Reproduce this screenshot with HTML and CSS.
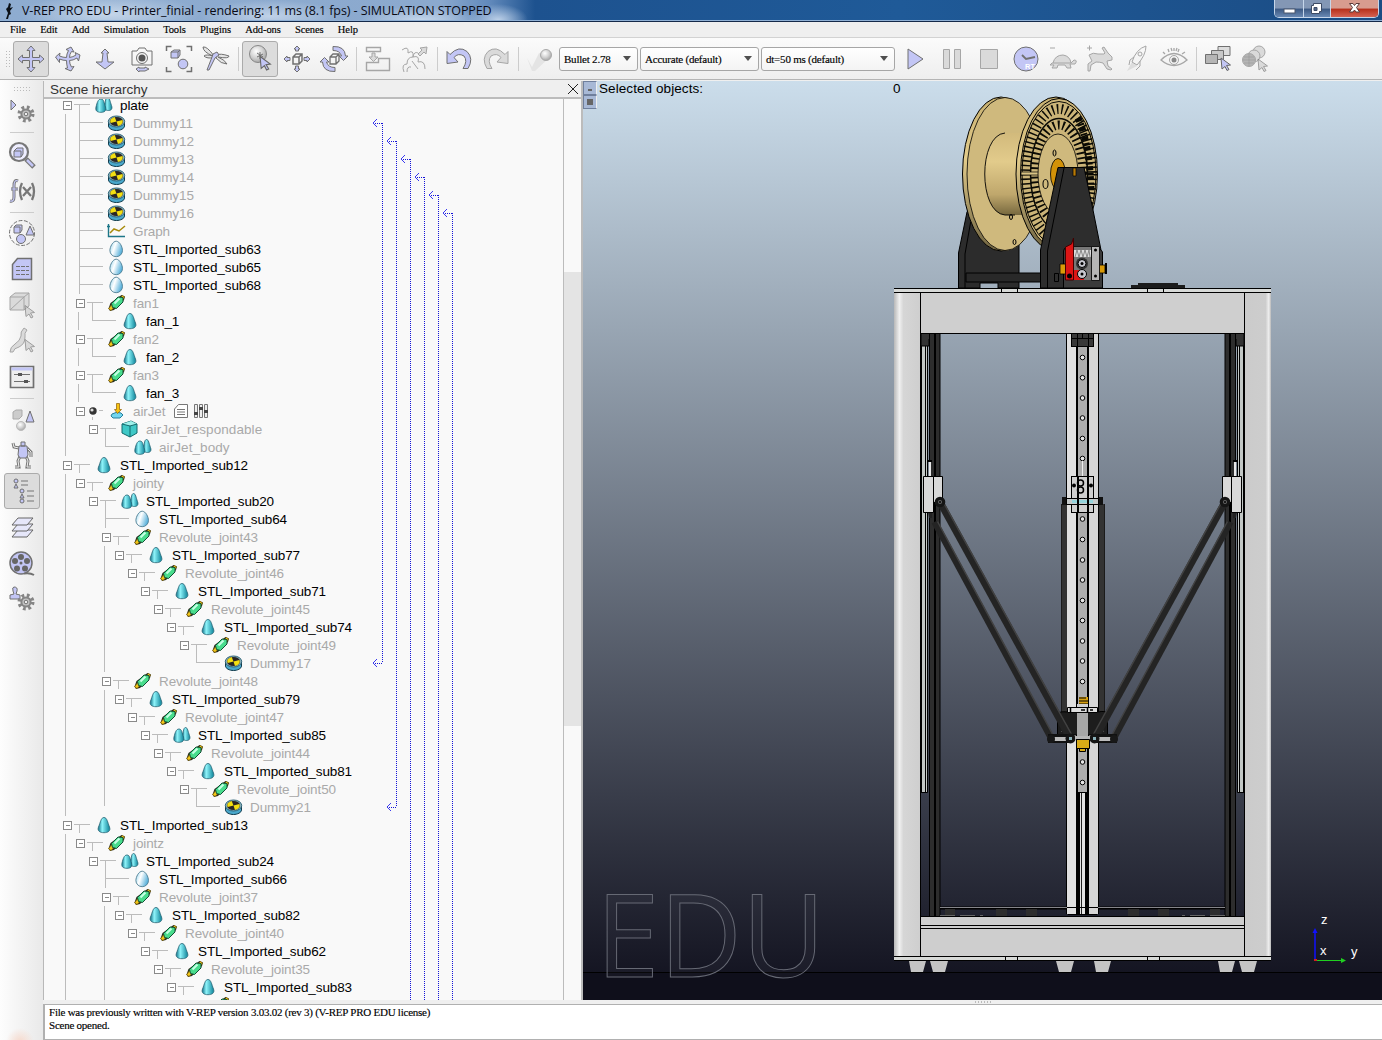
FILE: index.html
```html
<!DOCTYPE html>
<html lang="en">
<head>
<meta charset="utf-8">
<title>V-REP PRO EDU - Printer_finial</title>
<link rel="stylesheet" href="styles.css">
</head>
<body>
<svg class="defs" width="0" height="0">
  <defs>
    <linearGradient id="gCyan"><stop offset="0" stop-color="#0d6f86"/><stop offset=".35" stop-color="#8ff4fa"/><stop offset="1" stop-color="#0b8298"/></linearGradient>
    <linearGradient id="gEgg" x2="1" y2=".4"><stop offset="0" stop-color="#8fd3ee"/><stop offset=".45" stop-color="#fff"/><stop offset="1" stop-color="#5fb4dc"/></linearGradient>
    <radialGradient id="gBall" cx=".4" cy=".35" r=".75"><stop offset="0" stop-color="#fff"/><stop offset=".5" stop-color="#d2d2d2"/><stop offset="1" stop-color="#999"/></radialGradient>
    <symbol id="box" viewBox="0 0 30 18"><path d="M.5 5.500h8v8h-8zM2.500 9.500h4" fill="#fff" stroke="#8a8a8a"/><path d="M11 8.500h16M16.500 9v8" stroke="#bcbcbc"/></symbol>
    <symbol id="leaf" viewBox="0 0 30 18"><path d="M3 8.500h24" stroke="#bcbcbc"/></symbol>
    <symbol id="ball" viewBox="0 0 30 18"><path d="M.5 5.500h8v8h-8zM2.500 9.500h4" fill="#fff" stroke="#8a8a8a"/><path d="M23 8.500h4M16.500 15v3" stroke="#bcbcbc"/><g shape-rendering="auto"><circle cx="17" cy="9" r="3.700" fill="#333"/><circle cx="16" cy="8" r="1.600" fill="#ddd"/></g></symbol>
    <symbol id="cone" viewBox="0 0 20 18"><path d="M11 1.500C14 1.500 14.500 6 16.500 11C18 15 15 16.700 11 16.700S4 15 5.500 11C7.500 6 8 1.500 11 1.500Z" fill="url(#gCyan)" stroke="#276475" stroke-width=".8"/></symbol>
    <symbol id="cones" viewBox="0 0 20 18"><path d="M14.500 1.500c2.200 0 2.500 4 4 8 1.500 4-1 5-3 5s-5-1-4-5 1-8 3-8Z" fill="url(#gCyan)" stroke="#276475" stroke-width=".8"/><path d="M8 3c3 0 3 4 4.500 8 1 4-1 5.300-4.500 5.300s-6-1.300-5-5.300S5 3 8 3Z" fill="url(#gCyan)" stroke="#276475" stroke-width=".8"/></symbol>
    <symbol id="egg" viewBox="0 0 20 18"><path d="M10.200 1.200C13.700 1.200 16.500 7 16.500 10.500A6.300 6.200 0 0 1 3.900 10.500C3.900 7 6.700 1.200 10.200 1.200Z" fill="url(#gEgg)" stroke="#4d7d92" stroke-width=".9"/></symbol>
    <symbol id="dummy" viewBox="0 0 20 18"><path d="M2.500 8v4c0 2.500 4 4.500 8 4.500s8-2 8-4.500V8Z" fill="#49a8cc" stroke="#123b4c"/><ellipse cx="10.500" cy="7.500" rx="8.200" ry="5.500" fill="#8fb4bd" stroke="#2b6175"/><ellipse cx="10.500" cy="7.500" rx="6.600" ry="4.500" fill="#2a2624"/><path d="M10.500 7.500 4.700 9q-2-4 4-6ZM10.500 7.500l6-1.500q1.500 4-4.500 6Z" fill="#f3df12"/></symbol>
    <symbol id="joint" viewBox="0 0 20 18"><path d="M15.500 1l3.500 1.500-1 3.500-10 10-4 1-1.500-2.500L4.500 9Z" fill="#2b2b1a"/><path d="M13 5 16.500 1.500l2 1.500-3 4.500ZM2.700 14.800 6 10l3 2.500-4 4Z" fill="#f3c61b" stroke="#806000" stroke-width=".7"/><path d="M5.500 9.500 12 3l5 .5v4.500l-6.500 6.500-4-1Z" fill="#48dc8c" stroke="#124d34"/><path d="M8.500 9.500l5-5" stroke="#c7ffe5" stroke-width="2"/></symbol>
    <symbol id="graph" viewBox="0 0 20 18"><path d="M2.500 2v12.500H19M1 4.500h3" fill="none" stroke="#1d7688" stroke-width="1.400"/><path d="M4 11l4-4 5 2 6-5" fill="none" stroke="#a78a0b" stroke-width="1.500"/></symbol>
    <symbol id="force" viewBox="0 0 20 18"><path d="M6 12q5-3 9-1l2 2-3 3H7l-2-2Z" fill="#73d6ef" stroke="#277f9b"/><path d="M10.500 1.500h3v6h2l-4 4-3-4h2Z" fill="#f6c312" stroke="#8d5c00" stroke-width=".7"/></symbol>
    <symbol id="cube" viewBox="0 0 20 18"><path d="M3 4l9-3 6 3v9l-7 4-8-4Z" fill="#3fc8c6" stroke="#12696c"/><path d="M3 4l8 2 7-2-6-3Z" fill="#9ff0ea"/><path d="M3 4l8 2 7-2M11 6v11" fill="none" stroke="#12696c"/></symbol>
    <symbol id="cursor" viewBox="0 0 12 14"><path d="M1 1l9.500 7-4 .5 2.500 4-2 1L5 9.500 2 12Z" fill="#c3c6f5" stroke="#666"/></symbol>
    <symbol id="gear" viewBox="-9 -9 18 18"><circle r="6.500" fill="none" stroke="#858585" stroke-width="4" stroke-dasharray="2.600 2.505"/><circle r="4.600" fill="#c5c5c5" stroke="#858585" stroke-width="2"/><circle r="1.800" fill="#eee" stroke="#737373"/></symbol>
  </defs>
</svg>

<div class="window">
  <header class="titlebar">
    <svg class="app-icon" viewBox="0 0 12 18"><path d="M6 1l2 1-1 4 3-1-3 4 1 3-2 1-1 4H3l2-6-2-4 2-2Z" fill="#0b1016"/></svg>
    <h1 class="title">V-REP PRO EDU - Printer_finial - rendering: 11 ms (8.1 fps) - SIMULATION STOPPED</h1>
    <div class="winbtns">
      <span class="wb wb-min"><svg viewBox="0 0 28 18"><rect x="9" y="9" width="11" height="4" fill="#fff" stroke="#4a566c"/></svg></span>
      <span class="wb wb-max"><svg viewBox="0 0 26 18"><path d="M9.500 3.500h8v8h-2v2h-8v-8h2Z" fill="#fff" stroke="#3d4b64"/><path d="M10 7.500h3v3h-3z" fill="#54688c" stroke="#3d4b64"/></svg></span>
      <span class="wb wb-close"><svg viewBox="0 0 46 18"><path d="M18.500 3.500h3.500l1.500 2 1.500-2h3.500l-3 4 3 4.500H25l-1.500-2-1.500 2h-3.500l3-4.500Z" fill="#fff" stroke="#5a3b3b"/></svg></span>
    </div>
  </header>

  <nav class="menubar">
    <span>File</span><span>Edit</span><span>Add</span><span>Simulation</span><span>Tools</span><span>Plugins</span><span>Add-ons</span><span>Scenes</span><span>Help</span>
  </nav>

  <div class="toolbar">
    <i class="grip"></i>
    <span class="tb on"><svg viewBox="-15 -15 30 30"><path class="l" d="M0-13l4 4.500H1.500v7h7V-4l4.500 4-4.500 4V1.500h-7v7H4L0 13l-4-4.500h2.500v-7h-7V4L-13 0l4.500-4v2.500h7v-7H-4Z"/></svg></span>
    <span class="tb"><svg viewBox="-15 -15 30 30"><path class="l" d="M3-12 6-7 3.500-7.500Q1.500-5 1.500-1.500 5-2 8-4L7-6.500 12-4 10.500 2 9-1Q5 1.500 1.500 1.500 1.500 5 3.500 8L6 7.500 3 12-3 9.500-.5 9Q-1.500 5-1.500 1.500-5 1.500-8.500 0L-8.500 3.500-12.500-2-8-6-8.500-3Q-5-1.500-1.500-1.500-1.500-5 .5-8.500L-2-9.500Z"/></svg></span>
    <span class="tb"><svg viewBox="-15 -15 30 30"><path class="l" d="M0-10 4-6H2L3 3h6L0 10-9 3h6l1-9h-2Z"/></svg></span>
    <span class="tb"><svg viewBox="-15 -15 30 30"><path class="n" d="M-10-8h5l2-3h6l2 3h5V6h-20Z"/><circle r="5.500" cy="-1" class="n"/><circle r="3.500" cy="-1" fill="#555"/><path class="l" d="M-6 10l3-2v1h6v-1l4 2-4 2h-6v1Z"/></svg></span>
    <span class="tb"><svg viewBox="-15 -15 30 30"><path class="n" d="M-12.500-8v-4.500h5M7.500-12.500h5v4.500M12.500 8v4.500H7.500M-7.500 12.500h-5V8" stroke-width="1.500"/><path class="l" d="M-8-7l3-2h6v5l-2 3h-7ZM-8-7h7v6M-1-7l2-2"/><circle cx="4" cy="5" r="4.800" class="l"/></svg></span>
    <span class="tb"><svg viewBox="-15 -15 30 30"><path class="wing" d="M-2-3Q-9-13-13-12q0 5 10 9Q-10-5-12-3q3 3 10 1.500ZM1-4Q4-6 13-3q0 3-11 1Q9 1 11 5 5 5 0-1Z"/><path class="l" d="M-3-5l4-2 2 3-4 3-6 12h-2l5-13Z"/></svg></span>
    <i class="sep"></i>
    <span class="tb on"><svg viewBox="-15 -15 30 30"><circle cx="-2" cy="-5" r="8.500" fill="url(#gBall)" stroke="#888"/><path class="n" d="M-3-6l6 4M0-7v7M-3-2l6-3"/><use href="#cursor" x="-1" y="-4" width="13" height="16"/></svg></span>
    <span class="tb"><svg viewBox="-15 -15 30 30"><path class="l" d="M0-13l3 3H1.500v2h-3v-2H-3ZM0 13l3-3H1.500V7h-3v3H-3ZM-13 0l3-3v1.500h3v3h-3V3ZM13 0l-3-3v1.500H7v3h3V3Z"/><path class="n" d="M-4-2l3-3h6v7L2 5h-6ZM-4-2h6v7M2-2l3-3" stroke-width="1.500"/></svg></span>
    <span class="tb"><svg viewBox="-15 -15 30 30"><path class="l" d="M-1-12.500Q11-13 11.500-3H14L9.500 1.500 5-3H7.500Q6-8.500-1-8.500ZM1 12.500Q-11 13-11.500 3H-14L-9.500-1.500-5 3H-7.500Q-6 8.500 1 8.500Z"/><path class="n" d="M-4-2l3-3h6v7L2 5h-6ZM-4-2h6v7M2-2l3-3" stroke-width="1.300"/></svg></span>
    <i class="sep"></i>
    <span class="tb off"><svg viewBox="-15 -15 30 30"><path class="n" d="M-11.500-11.500H2.500v4h-14ZM-11.500 3.500h12v-4H11.500v12h-23Z" stroke-width="1.400"/><path class="l" d="M-6-6h3v4h3l-4.500 4.500L-9-2h3Z"/></svg></span>
    <span class="tb off"><svg viewBox="-15 -15 30 30"><path class="n" d="M-13-9q7-5 6 3 6-4 5 4 7-2 5 5 7-2 7 7M-11 13q-3-8 3-8 0-7 6-7 1-6 5-4M-8 13q0-6 4-5M-3 2l6 8"/><path class="l" d="M3-5l4-4-2-2 7-1-1 7-2-2-4 4Z"/></svg></span>
    <i class="sep"></i>
    <span class="tb"><svg viewBox="-15 -15 30 30"><path class="l" d="M-12 4.500v-12l3 3Q0-14 8-7.500q7 7 1 17H4Q9 2 5-3-1-6.500-5-1.500l4 4.500Z"/></svg></span>
    <span class="tb off"><svg viewBox="-15 -15 30 30"><path class="l" d="M12 4.500v-12l-3 3Q0-14-8-7.500q-7 7-1 17h5Q-9 2-5-3 1-6.500 5-1.500L1 3Z"/></svg></span>
    <i class="sep"></i>
    <span class="tb off"><svg viewBox="-15 -15 30 30"><path d="M-13-1-8 8-1-6 9-1-5 12-8 12Z" fill="#e4e4e4"/><circle cx="6" cy="-4" r="5.500" fill="url(#gBall)" stroke="#aaa"/></svg></span>
    <span class="combo c1">Bullet 2.78</span>
    <span class="combo c2">Accurate (default)</span>
    <span class="combo c3">dt=50 ms (default)</span>
    <span class="tb"><svg viewBox="-15 -15 30 30"><path class="l" d="M-7-10 8 0-7 10Z"/></svg></span>
    <span class="tb off"><svg viewBox="-15 -15 30 30"><path class="l" d="M-8.500-9.500h6v19h-6ZM2.500-9.500h6v19h-6Z"/></svg></span>
    <span class="tb off"><svg viewBox="-15 -15 30 30"><path class="l" d="M-8.500-9.500h17v19h-17Z"/></svg></span>
    <span class="tb"><svg viewBox="-15 -15 30 30"><circle r="12" class="l"/><path class="n" d="M-4-4 0 0 9-2" stroke-width="1.800"/><text x="-1" y="9.500" class="rt">RT</text></svg></span>
    <span class="tb off"><svg viewBox="-15 -15 30 30"><path class="n" d="M-13-11h5"/><path class="l" d="M-10 4Q-8-4 0-4 7-3 8 4H-11l-2 2h4l-2 3h5l1-3H2l2 3h4L7 5l5 0q3-4-1-4L8 4"/></svg></span>
    <span class="tb off"><svg viewBox="-15 -15 30 30"><path class="n" d="M-13-11h5M-10.500-13.500v5"/><path class="l" d="M-11-4Q-7-7-2-5L4-5 5-6 2-11l2-1 4 6 4 4 0 3-5 1 1 5 4 3-1 1-4-1-4-6Q0 3-4 3l-5 3-1 6h-2l0-7 4-3-2-4Z"/></svg></span>
    <span class="tb off"><svg viewBox="-15 -15 30 30"><path d="M-5 3-10 12 0 7Z" fill="#ddd"/><path class="n" d="M-5 3Q-1-10 9-13 9-4 0 6ZM-3-2-7 1l-1 5M3 2l0 5-4 4"/><circle cx="3" cy="-5" r="2" class="n"/></svg></span>
    <span class="tb off"><svg viewBox="-15 -15 30 30"><path class="n" d="M-13 1Q0-12 13 1 0 12-13 1ZM-9-5l-2-2M-5-7l-1-3M0-8v-3M4-7l1-3M8-5l3-2M-2-8l-1-3M2-8l1-3" stroke-width="1.300"/><circle r="4.500" cy="1" class="n"/><circle r="2.500" cy="1" fill="#888"/></svg></span>
    <i class="sep"></i>
    <span class="tb"><svg viewBox="-15 -15 30 30"><path class="n g1" d="M0-12.500h12v9H0Z"/><path class="n g2" d="M-6.500-8.500h12v9h-12Z"/><path class="n g3" d="M-12.500-4.500h12v9h-12Z"/><use href="#cursor" x="2" y="-2" width="12" height="14"/></svg></span>
    <span class="tb off"><svg viewBox="-15 -15 30 30"><circle cx="4" cy="-7" r="6" class="l"/><circle cx="-1" cy="-3" r="6" class="l"/><circle cx="-6" cy="1" r="6.500" class="n g3"/><path d="M-12 1h12M-6-5v12M-11-2h10M-11 4h10" stroke="#999" stroke-width=".6"/><use href="#cursor" x="2" y="-1" width="12" height="14"/></svg></span>
  </div>

  <div class="body">
    <aside class="side">
      <i class="hgrip"></i>
      <span class="sb"><svg viewBox="-15 -15 30 30"><path class="l" d="M-11-11-6-6l-5 5Z"/><use href="#gear" x="-5" y="-6" width="18" height="18"/></svg></span>
      <i class="hsep first"></i>
      <span class="sb"><svg viewBox="-15 -15 30 30"><path d="M4 4l8 8" stroke="#777" stroke-width="5"/><path d="M5 5l6 6" stroke="#c3c6f5" stroke-width="2.500"/><circle cx="-3" cy="-3" r="9" fill="#eef" stroke="#777" stroke-width="2.200"/><path class="l" d="M-8-4l3-3h6v6l-2 3h-7ZM-8-4h7v6"/></svg></span>
      <span class="sb"><svg viewBox="-15 -15 30 30"><path d="M-4-10q-4-2-4 5v11q0 5-4 4M-11-2h7" fill="none" stroke="#777" stroke-width="3"/><path d="M-4-10q-4-2-4 5v11q0 5-4 4M-11-2h7" fill="none" stroke="#c3c6f5" stroke-width="1.200"/><path d="M0-8q-4 8 0 17M10-8q4 8 0 17M1-4l8 9M9-4L1 5" fill="none" stroke="#777" stroke-width="2.300"/></svg></span>
      <i class="hsep"></i>
      <span class="sb"><svg viewBox="-15 -15 30 30"><circle r="12.500" class="n" stroke-dasharray="4 1.500"/><path class="l" d="M-8-6l2-2h6v5l-2 3h-6ZM-8-6h6v6M8-7l4 9H4Z"/><circle cx="-1" cy="6" r="4.500" class="l"/></svg></span>
      <span class="sb"><svg viewBox="-15 -15 30 30"><path class="l" d="M-9.500-4.500l5-6h14v21h-19Z" stroke-width="1.500"/><path class="n" d="M-6-2.500H7M-6 1.500H7M-6 5.500H7" stroke-dasharray="4 1"/></svg></span>
      <span class="sb off"><svg viewBox="-15 -15 30 30"><path class="l" d="M-12-8l5-4H7v13l-5 4h-14ZM-12-8H2V5M2-8l5-4M-12 5 2-8"/><use href="#cursor" x="2" y="-1" width="12" height="15"/></svg></span>
      <span class="sb off"><svg viewBox="-15 -15 30 30"><path class="l" d="M2-13Q-2-9-1-5-2 0-7 3-12 6-12 11h3q1-4 6-5Q3 3 3-4 2-8 5-11Z"/><use href="#cursor" x="2" y="-3" width="12" height="15"/></svg></span>
      <span class="sb"><svg viewBox="-15 -15 30 30"><path class="panel" d="M-11.500-10.500h23v21h-23Z"/><path d="M-10.500-9.500h21v3h-21z" fill="#c3c6f5"/><path class="n" d="M-8-2.500H8M-8 4.500H8"/><path d="M-4-4h4v3h-4zM2 3h4v3H2z" fill="#555"/></svg></span>
      <i class="hsep"></i>
      <span class="sb"><svg viewBox="-15 -15 30 30"><path d="M-9-7l3-2h6v6l-3 3h-6Z" fill="#ccc" stroke="#aaa"/><path class="l" d="M8-8l4 11H4Z"/><circle cx="-1" cy="7" r="4.500" fill="url(#gBall)" stroke="#bbb"/></svg></span>
      <span class="sb"><svg viewBox="-15 -15 30 30"><path d="M-3-7l-5-1-1-4M5-7l4 4v5M-2 1l-2 5 1 6h-4M4 1l2 5-1 6h4" fill="none" stroke="#777" stroke-width="3"/><path d="M-3-7l-5-1-1-4M5-7l4 4v5M-2 1l-2 5 1 6h-4M4 1l2 5-1 6h4" fill="none" stroke="#eee"/><path class="l" d="M-1-13h4v4h-4ZM-3-9h8l1 9-2 3h-6l-2-3Z"/></svg></span>
      <span class="sb on"><svg viewBox="-15 -15 30 30"><path d="M-1-11h7v2h-7zM-1-7h7v2h-7zM5-1h7v2H5zM5 4h7v2H5zM5 9h7v2H5z" fill="#a8a8a8"/><g class="l"><circle cx="-6" cy="-10" r="2"/><circle cx="0" cy="0" r="2"/><circle cx="0" cy="10" r="2"/><path d="M-6-7l2 4h-4ZM0 3l2 4h-4Z"/></g></svg></span>
      <span class="sb"><svg viewBox="-15 -15 30 30"><path class="sheet" d="M-4 3h15L5 10h-15Z"/><path class="sheet" d="M-4-3h15L5 4h-15Z"/><path class="sheet" d="M-4-9h15L5-2h-15Z"/></svg></span>
      <span class="sb"><svg viewBox="-15 -15 30 30"><circle r="11" cx="-1" class="l" stroke-width="1.500"/><g fill="#666"><circle cx="-1" cy="-6" r="3"/><circle cx="5" cy="-2" r="3"/><circle cx="3" cy="5.500" r="3"/><circle cx="-5" cy="5.500" r="3"/><circle cx="-7" cy="-2" r="3"/><circle cx="-1" cy="0" r="1.500"/></g><path class="n" d="M2 10.500q6-1 10 1.500" stroke-width="2"/></svg></span>
      <span class="sb"><svg viewBox="-15 -15 30 30"><path class="l" d="M-8-12q4 0 3 4l-1 3 4 1v4h-10v-4l4-1-1-3q-1-4 1-4Z"/><use href="#gear" x="-5" y="-6" width="18" height="18"/></svg></span>
    </aside>

    <div class="content">
      <div class="panes">
        <section class="hier">
          <div class="hier-head"><span>Scene hierarchy</span><svg class="x" viewBox="0 0 12 12"><path d="M1 1l10 10M11 1L1 11" stroke="#222"/></svg></div>
          <div class="hier-body">
            <div class="tree">
              <div class="row first" style="--d:0"><svg class="br"><use href="#box"/></svg><svg class="ic"><use href="#cones"/></svg><span>plate</span></div>
              <div class="row dim" style="--d:1"><svg class="br"><use href="#leaf"/></svg><svg class="ic"><use href="#dummy"/></svg><span>Dummy11</span></div>
              <div class="row dim" style="--d:1"><svg class="br"><use href="#leaf"/></svg><svg class="ic"><use href="#dummy"/></svg><span>Dummy12</span></div>
              <div class="row dim" style="--d:1"><svg class="br"><use href="#leaf"/></svg><svg class="ic"><use href="#dummy"/></svg><span>Dummy13</span></div>
              <div class="row dim" style="--d:1"><svg class="br"><use href="#leaf"/></svg><svg class="ic"><use href="#dummy"/></svg><span>Dummy14</span></div>
              <div class="row dim" style="--d:1"><svg class="br"><use href="#leaf"/></svg><svg class="ic"><use href="#dummy"/></svg><span>Dummy15</span></div>
              <div class="row dim" style="--d:1"><svg class="br"><use href="#leaf"/></svg><svg class="ic"><use href="#dummy"/></svg><span>Dummy16</span></div>
              <div class="row dim" style="--d:1"><svg class="br"><use href="#leaf"/></svg><svg class="ic"><use href="#graph"/></svg><span>Graph</span></div>
              <div class="row" style="--d:1"><svg class="br"><use href="#leaf"/></svg><svg class="ic"><use href="#egg"/></svg><span>STL_Imported_sub63</span></div>
              <div class="row" style="--d:1"><svg class="br"><use href="#leaf"/></svg><svg class="ic"><use href="#egg"/></svg><span>STL_Imported_sub65</span></div>
              <div class="row" style="--d:1"><svg class="br"><use href="#leaf"/></svg><svg class="ic"><use href="#egg"/></svg><span>STL_Imported_sub68</span></div>
              <div class="row dim" style="--d:1"><svg class="br"><use href="#box"/></svg><svg class="ic"><use href="#joint"/></svg><span>fan1</span></div>
              <div class="row" style="--d:2"><svg class="br"><use href="#leaf"/></svg><svg class="ic"><use href="#cone"/></svg><span>fan_1</span></div>
              <div class="row dim" style="--d:1"><svg class="br"><use href="#box"/></svg><svg class="ic"><use href="#joint"/></svg><span>fan2</span></div>
              <div class="row" style="--d:2"><svg class="br"><use href="#leaf"/></svg><svg class="ic"><use href="#cone"/></svg><span>fan_2</span></div>
              <div class="row dim" style="--d:1"><svg class="br"><use href="#box"/></svg><svg class="ic"><use href="#joint"/></svg><span>fan3</span></div>
              <div class="row" style="--d:2"><svg class="br"><use href="#leaf"/></svg><svg class="ic"><use href="#cone"/></svg><span>fan_3</span></div>
              <div class="row dim" style="--d:1"><svg class="br"><use href="#ball"/></svg><svg class="ic"><use href="#force"/></svg><span>airJet</span><svg class="extra" viewBox="0 0 36 16"><path d="M1.500 6l4-4.500h9v13h-13ZM4 6.500h8M4 9h8M4 11.500h8" fill="#fff" stroke="#777"/><path d="M21.500 1.500h3v13h-3zM26.500 1.500h3v13h-3zM31.500 1.500h3v13h-3z" fill="#eee" stroke="#777"/><path d="M21 9h4v3h-4zM26 4h4v3h-4zM31 7h4v3h-4z" fill="#444"/></svg></div>
              <div class="row dim" style="--d:2"><svg class="br"><use href="#box"/></svg><svg class="ic"><use href="#cube"/></svg><span class="wide">airJet_respondable</span></div>
              <div class="row dim" style="--d:3"><svg class="br"><use href="#leaf"/></svg><svg class="ic"><use href="#cones"/></svg><span class="wide">airJet_body</span></div>
              <div class="row" style="--d:0"><svg class="br"><use href="#box"/></svg><svg class="ic"><use href="#cone"/></svg><span>STL_Imported_sub12</span></div>
              <div class="row dim" style="--d:1"><svg class="br"><use href="#box"/></svg><svg class="ic"><use href="#joint"/></svg><span>jointy</span></div>
              <div class="row" style="--d:2"><svg class="br"><use href="#box"/></svg><svg class="ic"><use href="#cones"/></svg><span>STL_Imported_sub20</span></div>
              <div class="row" style="--d:3"><svg class="br"><use href="#leaf"/></svg><svg class="ic"><use href="#egg"/></svg><span>STL_Imported_sub64</span></div>
              <div class="row dim" style="--d:3"><svg class="br"><use href="#box"/></svg><svg class="ic"><use href="#joint"/></svg><span>Revolute_joint43</span></div>
              <div class="row" style="--d:4"><svg class="br"><use href="#box"/></svg><svg class="ic"><use href="#cone"/></svg><span>STL_Imported_sub77</span></div>
              <div class="row dim" style="--d:5"><svg class="br"><use href="#box"/></svg><svg class="ic"><use href="#joint"/></svg><span>Revolute_joint46</span></div>
              <div class="row" style="--d:6"><svg class="br"><use href="#box"/></svg><svg class="ic"><use href="#cone"/></svg><span>STL_Imported_sub71</span></div>
              <div class="row dim" style="--d:7"><svg class="br"><use href="#box"/></svg><svg class="ic"><use href="#joint"/></svg><span>Revolute_joint45</span></div>
              <div class="row" style="--d:8"><svg class="br"><use href="#box"/></svg><svg class="ic"><use href="#cone"/></svg><span>STL_Imported_sub74</span></div>
              <div class="row dim" style="--d:9"><svg class="br"><use href="#box"/></svg><svg class="ic"><use href="#joint"/></svg><span>Revolute_joint49</span></div>
              <div class="row dim" style="--d:10"><svg class="br"><use href="#leaf"/></svg><svg class="ic"><use href="#dummy"/></svg><span>Dummy17</span></div>
              <div class="row dim" style="--d:3"><svg class="br"><use href="#box"/></svg><svg class="ic"><use href="#joint"/></svg><span>Revolute_joint48</span></div>
              <div class="row" style="--d:4"><svg class="br"><use href="#box"/></svg><svg class="ic"><use href="#cone"/></svg><span>STL_Imported_sub79</span></div>
              <div class="row dim" style="--d:5"><svg class="br"><use href="#box"/></svg><svg class="ic"><use href="#joint"/></svg><span>Revolute_joint47</span></div>
              <div class="row" style="--d:6"><svg class="br"><use href="#box"/></svg><svg class="ic"><use href="#cones"/></svg><span>STL_Imported_sub85</span></div>
              <div class="row dim" style="--d:7"><svg class="br"><use href="#box"/></svg><svg class="ic"><use href="#joint"/></svg><span>Revolute_joint44</span></div>
              <div class="row" style="--d:8"><svg class="br"><use href="#box"/></svg><svg class="ic"><use href="#cone"/></svg><span>STL_Imported_sub81</span></div>
              <div class="row dim" style="--d:9"><svg class="br"><use href="#box"/></svg><svg class="ic"><use href="#joint"/></svg><span>Revolute_joint50</span></div>
              <div class="row dim" style="--d:10"><svg class="br"><use href="#leaf"/></svg><svg class="ic"><use href="#dummy"/></svg><span>Dummy21</span></div>
              <div class="row" style="--d:0"><svg class="br"><use href="#box"/></svg><svg class="ic"><use href="#cone"/></svg><span>STL_Imported_sub13</span></div>
              <div class="row dim" style="--d:1"><svg class="br"><use href="#box"/></svg><svg class="ic"><use href="#joint"/></svg><span>jointz</span></div>
              <div class="row" style="--d:2"><svg class="br"><use href="#box"/></svg><svg class="ic"><use href="#cones"/></svg><span>STL_Imported_sub24</span></div>
              <div class="row" style="--d:3"><svg class="br"><use href="#leaf"/></svg><svg class="ic"><use href="#egg"/></svg><span>STL_Imported_sub66</span></div>
              <div class="row dim" style="--d:3"><svg class="br"><use href="#box"/></svg><svg class="ic"><use href="#joint"/></svg><span>Revolute_joint37</span></div>
              <div class="row" style="--d:4"><svg class="br"><use href="#box"/></svg><svg class="ic"><use href="#cone"/></svg><span>STL_Imported_sub82</span></div>
              <div class="row dim" style="--d:5"><svg class="br"><use href="#box"/></svg><svg class="ic"><use href="#joint"/></svg><span>Revolute_joint40</span></div>
              <div class="row" style="--d:6"><svg class="br"><use href="#box"/></svg><svg class="ic"><use href="#cone"/></svg><span>STL_Imported_sub62</span></div>
              <div class="row dim" style="--d:7"><svg class="br"><use href="#box"/></svg><svg class="ic"><use href="#joint"/></svg><span>Revolute_joint35</span></div>
              <div class="row" style="--d:8"><svg class="br"><use href="#box"/></svg><svg class="ic"><use href="#cone"/></svg><span>STL_Imported_sub83</span></div>
              <div class="row dim" style="--d:9"><svg class="br"></svg><svg class="ic"><use href="#joint"/></svg></div>
              <svg class="links" viewBox="45 99 518 901" fill="none">
                <path d="M65.500 114V456M65.500 474V816M65.500 834V1000M79.500 105V294M78.500 312V330M78.500 348V366M78.500 384V402M92.500 304V321M92.500 340V357M92.500 376V393M105.500 430V447M105.500 502V528M104.500 546V672M104.500 690V806M196.500 646V663M196.500 790V807M105.500 862V888M104.500 906V1000" stroke="#bcbcbc"/>
                <g stroke="#1414d8" stroke-dasharray="1 1">
                  <path d="M382.500 123V663M396.500 141V807M410.500 159V1000M424.500 177V1000M438.500 195V1000M452.500 213V1000"/>
                  <path d="M373 123.500h9M387 141.500h9M401 159.500h9M415 177.500h9M429 195.500h9M443 213.500h9M373 663.500h9M387 807.500h9"/>
                </g>
                <path d="M377 119l-4 4 4 4M391 137l-4 4 4 4M405 155l-4 4 4 4M419 173l-4 4 4 4M433 191l-4 4 4 4M447 209l-4 4 4 4M377 659l-4 4 4 4M391 803l-4 4 4 4" stroke="#3a3af0"/>
              </svg>
            </div>
            <div class="scroll"><i class="thumb"></i></div>
          </div>
        </section>

        <section class="view">
          <svg class="scene" viewBox="583 81 799 919">
            <defs>
              <linearGradient id="colL"><stop offset="0" stop-color="#b8b8b8"/><stop offset=".2" stop-color="#f0f0f0"/><stop offset=".35" stop-color="#d6d6d6"/><stop offset="1" stop-color="#cecece"/></linearGradient>
              <linearGradient id="colR"><stop offset="0" stop-color="#cbcbcb"/><stop offset=".8" stop-color="#cdcdcd"/><stop offset=".92" stop-color="#efefef"/><stop offset="1" stop-color="#b8b8b8"/></linearGradient>
              <linearGradient id="hub" x2="0" y2="1"><stop offset="0" stop-color="#d2ba7c"/><stop offset=".35" stop-color="#e2cb8b"/><stop offset=".75" stop-color="#bfa76c"/><stop offset="1" stop-color="#77683e"/></linearGradient>
              <linearGradient id="rim" x2="0" y2="1"><stop offset="0" stop-color="#c7b070"/><stop offset=".4" stop-color="#e3cc8b"/><stop offset="1" stop-color="#6f6340"/></linearGradient>
              <g id="half">
                <path d="M922 346h5v446h-5z" fill="#c2c7c5"/><path d="M921.500 346V792.500M925.500 346V792M927.500 346V792.500H921" fill="none" stroke="#000"/>
                <path d="M921 333h14v6h-6v7h-8z" fill="#333" stroke="#000"/>
                <path d="M929 333h11v583h-11z" fill="#2d2d2d"/><path d="M935 333v583" stroke="#000" stroke-width="2"/><path d="M929.500 333v583M940 333v583" stroke="#000"/>
                <path d="M929 462h2v14h-2z" fill="#e8e8e8"/><path d="M928 460h4v2h-4z"/>
                <path d="M928 512h4v6h-3z" fill="#222"/>
                <path d="M934.500 522 1050 736" stroke="#242424" stroke-width="6.500"/><path d="M937.500 521.500 1053 735" stroke="#424242" stroke-width="1.500"/>
                <path d="M923.500 476.500h10v36h-10zM933.500 476.500h9v26h-9z" fill="#d9d9d9" stroke="#000"/>
                <path d="M941 504 1070 738" stroke="#242424" stroke-width="7"/><path d="M944 503.500 1073 737" stroke="#424242" stroke-width="1.500"/>
                <path d="M1048 734h22v9h-22z" fill="#111"/><path d="M1052 737h14v4h-14z" fill="#bbb"/>
                <circle cx="940" cy="502" r="5.300" fill="#151515"/><circle cx="940" cy="502" r="2" fill="#666"/><circle cx="940" cy="502" r="1"/>
                <circle cx="1051" cy="739" r="4" fill="#181818"/><circle cx="1070.500" cy="738.500" r="5" fill="#151515"/><path d="M1069 737h3v3h-3z" fill="#8bb2bb"/>
                <path d="M940 908h127" stroke="#000" stroke-width="3"/><path d="M940 907.500h127" stroke="#85858a"/>
                <path d="M945 909h10v8h-10zM996 909h11v8h-11zM1026 909h11v8h-11z" fill="#2e2e2e"/><path d="M940 915.500h43" stroke="#666" stroke-dasharray="15 5"/>
              </g>
            </defs>
            <path d="M583 972.500h799" stroke="#000"/><path d="M583 973h799v27H583z" fill="#0f0f1b"/>
            <text x="596" y="977" class="edu" textLength="229" lengthAdjust="spacingAndGlyphs">EDU</text>

            <!-- spool and its stand -->
            <path d="M958.500 288V253L967 212 975 200h44v88h-21v-5h-18v5z" fill="#2c2c2c" stroke="#000"/><path d="M965 288V254l6-34" stroke="#000" fill="none"/>
            <ellipse cx="1001" cy="174" rx="38.500" ry="77" fill="url(#rim)" stroke="#000"/>
            <ellipse cx="1005" cy="174" rx="38" ry="76.500" fill="#cfb97d" stroke="#000" stroke-width=".8"/>
            <path d="M1030 133h-25c-27 2-27 80 0 82h25z" fill="url(#hub)"/><path d="M1005 133c-27 2-27 80 0 82h10" fill="none" stroke="#000" stroke-width=".9"/>
            <ellipse cx="1011" cy="217" rx="1.500" ry="2.500" fill="none" stroke="#000"/><ellipse cx="1014.500" cy="242" rx="1.500" ry="2.500" fill="none" stroke="#000"/>
            <ellipse cx="1056" cy="174" rx="40" ry="77" fill="url(#rim)" stroke="#000"/>
            <ellipse cx="1059" cy="174" rx="38.500" ry="75.500" fill="#cbb478" stroke="#000"/>
            <g fill="none" stroke="#0a0a05">
              <ellipse cx="1059" cy="174" rx="33" ry="65" stroke-width="10" stroke-dasharray="1.500 3.100"/>
              <ellipse cx="1059" cy="173" rx="24" ry="48" stroke-width="9" stroke-dasharray="1.800 3"/>
              <ellipse cx="1059" cy="174" rx="28.500" ry="55.500" stroke-width="1.500"/>
              <ellipse cx="1059" cy="174" rx="37" ry="72.500" stroke-width="1"/>
              <path d="M1078 118q12 26 13 75" stroke-width="7" stroke-dasharray="4 2.500 2 1.500"/>
            </g>
            <path d="M1021 172h18v3h-18z" fill="#d9c384" stroke="#000" stroke-width=".7"/>
            <ellipse cx="1058" cy="174" rx="20" ry="40" fill="#cfb97d" stroke="#000" stroke-width=".8"/>
            <ellipse cx="1054.500" cy="153" rx="1.500" ry="3" fill="none" stroke="#000"/><ellipse cx="1045.500" cy="184" rx="2.500" ry="4.500" fill="none" stroke="#000"/>
            <ellipse cx="1058" cy="174" rx="7.500" ry="15.500" fill="#d39208" stroke="#000" stroke-width=".8"/>
            <path d="M966 273h75v9h-75z" fill="#292929" stroke="#000"/>
            <path d="M1040.500 288V250L1058 167.500H1084L1092 205 1101 250V288z" fill="#2d2d2d" stroke="#000"/><path d="M1047.500 288V251L1064 168" fill="none" stroke="#000"/>
            <path d="M1073 168h3v8h-3z" fill="#b97a05" stroke="#000" stroke-width=".7"/>
            <path d="M1063.500 288V251q0-3 4-4h31l4 5v36z" fill="#3b3b3b" stroke="#000"/>
            <path d="M1054.500 273.500h4v8h-4z" fill="none" stroke="#000"/>
            <path d="M1060 264h6v10h-6zM1099 265h6v8h-6z" fill="#d99a08" stroke="#000" stroke-width=".8"/><path d="M1105 263h2v11h-2z"/>
            <path d="M1074 247h17v33h-17z" fill="#777"/><path d="M1074 250h17v7h-17z" fill="#ddd"/><path d="M1075 257l2-7 2 7 2-7 2 7 2-7 2 7 2-7 1 7" stroke="#888" fill="none"/>
            <path d="M1091.500 246.500h8v34h-8z" fill="#b6b6b6" stroke="#000" stroke-width=".8"/>
            <path d="M1065.500 280V247l6-3 2-6v42zM1074 270h10v10h-10z" fill="#dc1515"/><path d="M1065.500 280V247l6-3 2-6v42z" fill="none" stroke="#400"/>
            <circle cx="1082" cy="263.500" r="6" fill="#333"/><circle cx="1082" cy="263.500" r="4" fill="#c8c8d0" stroke="#000"/><circle cx="1082" cy="274" r="4.500" fill="#c8c8d0" stroke="#000"/><circle cx="1082" cy="263.500" r="1.500"/><circle cx="1082" cy="274" r="1.500"/><circle cx="1069.500" cy="276" r="2.500"/><circle cx="1095.500" cy="250" r="1.500"/><circle cx="1095.500" cy="276" r="1.500"/>
            <path d="M1138 283h40v2h7v3h-54v-3h7z" fill="#1c1c1c"/>

            <g shape-rendering="crispEdges">
              <!-- centre column -->
              <path d="M1067 333h31v581h-31z" fill="#d6d6d6"/><path d="M1067 333h9v581h-9z" fill="#e0e0e0"/>
              <path d="M1066.500 333v581M1098.500 333v581" stroke="#000"/>
              <path d="M1077 333h11v459h-11z" fill="#adadad"/><path d="M1077 333v581M1088 333v581" stroke="#000" stroke-width="2"/>
              <path d="M1078 792h9v122h-9z"/><path d="M1080 792h5v122h-5z" fill="#e3e3e3"/><path d="M1081.500 792v122" stroke="#222"/><path d="M1077 792.500h11M1068 914.500h29" stroke="#000"/>
              <path d="M1071 333h22v13h-22z" fill="#383838" stroke="#000"/><path d="M1071 338.500h22M1077 333v13M1088 333v13M1082 333v5" stroke="#000"/>
              <path d="M1061 504h6v208h-6zM1099 504h5v208h-5z" fill="#333"/><path d="M1061.500 504v208M1104.500 504v208" stroke="#1b1b1b"/>
              <path d="M1062 497h4v8h-4zM1099 497h4v8h-4z" fill="#111"/>
            </g>
            <g fill="#e6e6e6" stroke="#000"><circle cx="1082.500" cy="357.500" r="2.300"/><circle cx="1082.500" cy="377.700" r="2.300"/><circle cx="1082.500" cy="398" r="2.300"/><circle cx="1082.500" cy="418" r="2.300"/><circle cx="1082.500" cy="438.500" r="2.300"/><circle cx="1082.500" cy="458.500" r="2.300"/><circle cx="1082.500" cy="519" r="2.300"/><circle cx="1082.500" cy="539.500" r="2.300"/><circle cx="1082.500" cy="560" r="2.300"/><circle cx="1082.500" cy="580" r="2.300"/><circle cx="1082.500" cy="600.500" r="2.300"/><circle cx="1082.500" cy="620.500" r="2.300"/><circle cx="1082.500" cy="641" r="2.300"/><circle cx="1082.500" cy="661" r="2.300"/><circle cx="1082.500" cy="681.500" r="2.300"/><circle cx="1082.500" cy="762" r="2.300"/><circle cx="1082.500" cy="782.500" r="2.300"/></g>
            <g shape-rendering="crispEdges">
              <path d="M1082.500 461v15" stroke="#eee"/>
              <path d="M1071.500 476.500h22v36h-22z" fill="#cfcfcf" stroke="#000"/><path d="M1066.500 498.500h32v6h-32z" fill="#c5caca" stroke="#000"/><path d="M1072 500h21v3h-21z" fill="#95d4dc"/><path d="M1077.500 476v36M1088 476v36" stroke="#000" stroke-width="2"/>
            </g>
            <circle cx="1080.500" cy="483" r="3" fill="none" stroke="#000" stroke-width="1.500"/><circle cx="1080.500" cy="490" r="3" fill="none" stroke="#000" stroke-width="1.500"/><circle cx="1074" cy="485.500" r="2"/><circle cx="1091" cy="485.500" r="2"/>
            <!-- effector -->
            <path d="M1057.500 714q2-3 10-2h30q10-2 10 3v20h-50z" fill="#1d1d1d" stroke="#000"/>
            <path d="M1061 718l6 8-6 6M1104 718l-5 8 5 6" stroke="#4a4a4a" fill="none"/>
            <path d="M1077 712h11v24h-11z" fill="#a7a7a7"/><path d="M1067.500 707.500h30v5h-30z" fill="#ddd" stroke="#000"/><path d="M1070.500 707v5M1087.500 707v5M1081 710h4M1090 710h3" stroke="#000" stroke-width="1.500"/>
            <path d="M1079 697h9v7h-9z" fill="#d7a011"/><path d="M1079 698h7M1079 701h9M1079 704h9" stroke="#000"/><path d="M1077 704h11v3h-11z" fill="#d0d0d0"/>
            <use href="#half"/><use href="#half" transform="matrix(-1 0 0 1 2165 0)"/>
            <path d="M1067 907.500h31" stroke="#000"/>
            <path d="M1075 736h15v3h-15z" fill="#b7b7b7"/><path d="M1076.500 739.500h13v9h-13zM1079.500 748.500h6v3h-6z" fill="#d9ab17" stroke="#000"/>

            <!-- frame -->
            <g shape-rendering="crispEdges">
              <path d="M921 293h323v40H921z" fill="#cfcfcf"/><path d="M921 916h323v41H921z" fill="#cecece"/>
              <path d="M894 292h27v665h-27z" fill="url(#colL)"/><path d="M1244 292h27v665h-27z" fill="url(#colR)"/>
              <path d="M894 289h377v3H894zM894 957h377v3H894z" fill="#d7d9d7"/>
              <path d="M894 288.500h377M894 292.500h377M920.500 293v664M1244.500 293v664M921 333.500h323M921 916.500h323M921 925.500h323M921 928.500h323M894 956.500h377M894 960.500h377M1001.500 289v3M1017.500 289v3M1147.500 289v3M1163.500 289v3M1005.500 957v4M1017.500 957v4M1147.500 957v4M1159.500 957v4" stroke="#000" fill="none"/>
            </g>
            <g fill="#c4c4c4"><path d="M909 961h17l-3 11h-12zM930 961h18l-3 11h-12zM1056 961h18l-3 11h-12zM1094 961h17l-3 11h-12zM1218 961h17l-3 11h-12zM1239 961h18l-3 11h-12z"/></g>
            <!-- axes -->
            <path d="M1315 930v30" stroke="#1010ff" stroke-width="1.500"/><path d="M1312.500 933l2.500-5 2.500 5" fill="#1010ff"/><path d="M1315 960.500h30" stroke="#20d020"/><path d="M1341 958l5 2.500-5 2.500z" fill="#20d020"/><path d="M1314 959h3v2h-3z" fill="#d02020"/>
            <g class="axis"><text x="1321" y="924">z</text><text x="1320" y="955">x</text><text x="1351" y="956">y</text></g>
          </svg>
          <div class="hud">
            <div class="hud-btns"><i class="hb minus"></i><i class="hb square"></i></div>
            <span class="hud-label">Selected objects:</span><span>0</span>
          </div>
        </section>
      </div>
      <div class="splitter"><i></i></div>
      <div class="log"><p>File was previously written with V-REP version 3.03.02 (rev 3) (V-REP PRO EDU license)</p><p>Scene opened.</p></div>
    </div>
  </div>
</div>
</body>
</html>
```
FILE: styles.css
```css
* { box-sizing: border-box; }
body { margin: 0; font-family: "Liberation Sans", Arial, sans-serif; overflow: hidden; }
.defs { position: absolute; }
.window { width: 1382px; height: 1040px; display: flex; flex-direction: column; background: #efefef; }
svg { display: block; }

.titlebar { height: 22px; flex: none; display: flex; align-items: flex-start; border-bottom: 1px solid #14294a; box-shadow: inset 0 -1px #8fb0d5;
  background: radial-gradient(ellipse 30px 16px at 498px 20px, #bcd0e8, transparent), radial-gradient(ellipse 60px 14px at 420px 20px, #c3d5ea, transparent), radial-gradient(ellipse 70px 16px at 270px 16px, #c0d2e8, transparent), radial-gradient(ellipse 90px 20px at 110px 14px, #c5d6e9, transparent), linear-gradient(90deg, #8eacd0, #8ba9ce 440px, #6189bb 490px, #1d528f 535px, #1f5a98 900px, #1b4c84); }
.app-icon { width: 12px; height: 18px; margin: 2px 0 0 3px; }
.title { margin: 0 auto 0 7px; font: 12.500px/21px "Open Sans", "Noto Sans", sans-serif; letter-spacing: -.08px; color: #0a0a14; white-space: nowrap; }
.winbtns { display: flex; height: 18px; margin-right: 3px; border: 1px solid #c6d6ea; border-top: 0; border-radius: 0 0 5px 5px; overflow: hidden; }
.wb { height: 18px; border-right: 1px solid #c6d6ea; background: linear-gradient(#8397b5 0 45%, #3c5983 50%, #6f8fb9); }
.wb svg { height: 18px; }
.wb-min { width: 29px; } .wb-max { width: 27px; }
.wb-close { width: 47px; border: 0; background: linear-gradient(#d89c8f 0 45%, #b7301b 50%, #d8695a); }

.menubar { height: 16px; flex: none; display: flex; padding-left: 10px; gap: 14.300px; border-bottom: 1px solid #d2d2d2; font: 10.500px/15px "Liberation Serif", serif; letter-spacing: -.1px; color: #000; -webkit-text-stroke: .15px; }

.toolbar { height: 42px; flex: none; display: flex; align-items: center; gap: 1px; background: linear-gradient(#fbfbfb, #eee); border-bottom: 1px solid #b4b4b4; }
.grip { width: 6px; height: 18px; margin: 0 1px 0 5px; background: radial-gradient(circle, #bbb .7px, transparent 1px) 0 0 / 3px 3px; }
.tb, .sb { width: 36px; height: 36px; flex: none; display: flex; align-items: center; justify-content: center; border-radius: 3px; }
.tb svg, .sb svg { width: 30px; height: 30px; }
.on { background: #dcdcdc; border: 1px solid #ababab; }
.sep { width: 6px; height: 24px; flex: none; background: linear-gradient(#ccc, #ccc) 3px 0 / 1px 100% no-repeat; }
.l { fill: #c3c6f5; stroke: #707070; }
.n { fill: none; stroke: #707070; }
.wing { fill: #e4e4e4; stroke: #707070; }
.sheet { fill: #e6e7fa; stroke: #666; }
.panel { fill: #eee; stroke: #707070; stroke-width: 1.700; }
.g1 { fill: #ddd; } .g2 { fill: #c8c8c8; } .g3 { fill: #b5b5b5; }
.off .l { fill: #dadada; stroke: #a6a6a6; }
.off .n { stroke: #a6a6a6; }
.off use { filter: grayscale(1) opacity(.6); }
.rt { font: bold 7.500px "Liberation Sans", sans-serif; fill: #fff; }
.combo { height: 24px; flex: none; margin-right: 1px; border: 1px solid #a6a6a6; border-radius: 3px; background: linear-gradient(#fff, #f4f4f4); display: flex; align-items: center; justify-content: space-between; padding: 0 6px 0 4px; font: 11px "Liberation Serif", serif; letter-spacing: -.22px; -webkit-text-stroke: .15px; white-space: nowrap; }
.combo::after { content: ""; border: 4px solid transparent; border-top: 5px solid #505050; border-bottom: 0; }
.c1 { width: 79px; } .c2 { width: 119px; } .c3 { width: 134px; }

.body { flex: 1; min-height: 0; display: flex; }
.side { width: 43px; flex: none; display: flex; flex-direction: column; align-items: center; padding: 6px 0 0 1px; background: radial-gradient(circle at 20px 962px, #f6d9cc, transparent 14px), linear-gradient(90deg, #fdfdfd, #e9e9e9); }
.hgrip { width: 18px; height: 6px; margin-bottom: 1px; background: radial-gradient(circle, #bbb .7px, transparent 1px) 0 0 / 3px 3px; }
.hsep { width: 24px; height: 6px; flex: none; background: linear-gradient(#ccc, #ccc) 0 3px / 100% 1px no-repeat; }
.hsep.first { height: 8px; }

.content { flex: 1; min-width: 0; display: flex; flex-direction: column; }
.panes { height: 920px; flex: none; display: flex; padding-top: 1px; }
.hier { width: 540px; flex: none; display: flex; flex-direction: column; border-left: 1px solid #b8b8b8; border-right: 2px solid #bcbcbc; background: #f9f9f9; }
.hier-head { height: 18px; flex: none; display: flex; justify-content: space-between; padding: 0 2px 0 6px; background: #efefef; border-bottom: 2px solid #bcbcbc; font-size: 13.500px; line-height: 17px; color: #333; }
.x { width: 12px; height: 12px; margin-top: 2px; }
.hier-body { flex: 1; min-height: 0; display: flex; }
.tree { flex: 1; margin-left: 1px; position: relative; overflow: hidden; }
.row { height: 18px; display: flex; align-items: center; padding-left: calc(18px + 13px * var(--d)); font-size: 13.500px; line-height: 16px; letter-spacing: -.1px; color: #000; white-space: nowrap; }
.row span { padding-top: 2px; }
.row .wide { letter-spacing: .08px; }
.row.first { height: 15px; align-items: flex-start; line-height: 14px; }
.row.first span { padding-top: 0; }
.row.first svg { margin-top: -3px; }
.dim { color: #a9a9a9; }
.br { width: 30px; height: 18px; flex: none; shape-rendering: crispEdges; }
.ic { width: 20px; height: 18px; flex: none; margin-right: 7px; }
.extra { width: 36px; height: 16px; margin-left: 8px; }
.links { position: absolute; left: 0; top: 0; width: 518px; height: 901px; shape-rendering: crispEdges; }
.scroll { width: 18px; flex: none; border-left: 1px solid #bcbcbc; padding-top: 173px; }
.thumb { display: block; height: 454px; background: #e4e4e4; }

.view { flex: 1; display: grid; background: linear-gradient(#cbddeb, #0f0f1c); }
.view > * { grid-area: 1 / 1; }
.scene { width: 799px; height: 919px; overflow: visible; }
.hud { display: flex; align-items: flex-start; font-size: 13.500px; line-height: 15px; height: 30px; letter-spacing: .08px; }
.hud-label { width: 294px; margin-left: 2px; }
.hb { display: flex; width: 14px; height: 14px; align-items: center; justify-content: center; background: #a8b9d6; border: 1px solid #6f7f9c; border-right-color: #eee; }
.hb::after { content: ""; width: 6px; height: 6px; background: #666; }
.hb.minus::after { width: 4px; height: 2px; margin-top: 4px; }
.edu { font: 600 116px "Open Sans", "Noto Sans", sans-serif; font-weight: 400; fill: rgba(120,120,130,.08); stroke: #666974; stroke-width: 1; }
.axis text { font: 13px "Liberation Sans", sans-serif; fill: #fff; }

.splitter { height: 4px; flex: none; display: flex; justify-content: center; align-items: center; padding-left: 540px; }
.splitter i { width: 16px; height: 2px; background: repeating-linear-gradient(90deg, #bbb 0 1px, transparent 1px 3px); }
.log { flex: 1; border: 1px solid #b0b0b0; border-width: 1px 0 1px 2px; background: #fff; padding: 1px 0 0 4px; font: 11px/13px "Liberation Serif", serif; letter-spacing: -.24px; color: #000; -webkit-text-stroke: .15px; }
.log p { margin: 0; }
```
